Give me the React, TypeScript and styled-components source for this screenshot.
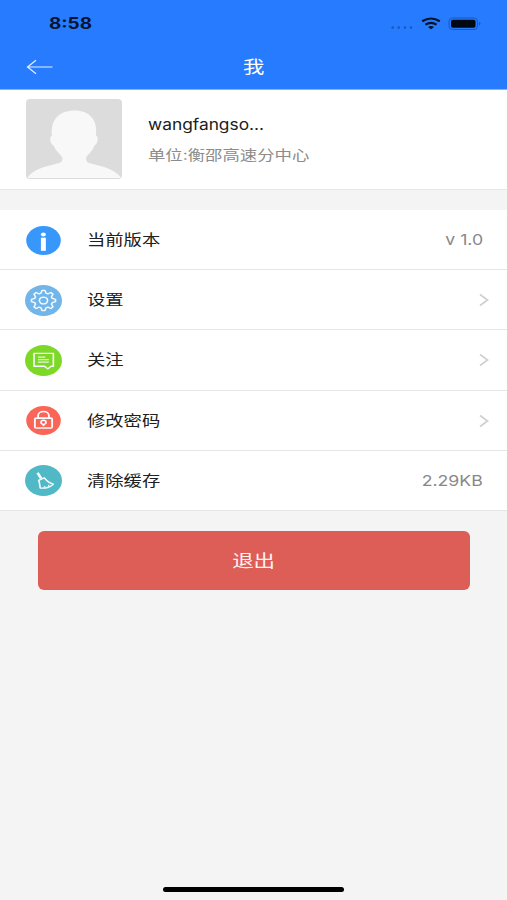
import React from "react";
import styled, { createGlobalStyle } from "styled-components";

const GlobalStyle = createGlobalStyle`
  * { box-sizing: border-box; }
  body {
    margin: 0;
    background: #f4f4f4;
    font-family: Inter, "Noto Sans CJK SC", sans-serif;
  }
`;

const Screen = styled.div`
  display: flex;
  flex-direction: column;
  height: 900px;
  background: #f4f4f4;
  overflow: hidden;
`;

const Header = styled.header`
  height: 90px;
  flex: none;
  background: #277bff;
  border-bottom: 1px solid #8bb4f6;
  color: #fff;
`;

const StatusBar = styled.div`
  display: flex;
  align-items: center;
  justify-content: space-between;
  height: 47px;
  padding: 0 26px 0 49px;
`;

const StatusIcons = styled.svg`
  width: 91px;
  height: 20px;
`;

const NavBar = styled.div`
  display: grid;
  grid-template-columns: 1fr auto 1fr;
  align-items: center;
  height: 40px;
  padding: 0 26px;
`;

const BackIcon = styled.svg`
  width: 27px;
  height: 16px;
`;

const Stretched = styled.span<{
  $size: number;
  $color: string;
  $origin?: string;
  $weight?: number;
  $ratio?: number;
}>`
  display: block;
  white-space: nowrap;
  font-size: ${(p) => p.$size}px;
  line-height: 24px;
  font-weight: ${(p) => p.$weight ?? 400};
  color: ${(p) => p.$color};
  transform: scaleX(${(p) => p.$ratio ?? 1.22});
  transform-origin: ${(p) => p.$origin ?? "left"} center;
`;

const Profile = styled.section`
  display: flex;
  flex: none;
  height: 100px;
  padding: 9px 26px 0;
  gap: 26px;
  background: #fff;
  border-bottom: 1px solid #e7e7e7;
`;

const Avatar = styled.svg`
  width: 96px;
  height: 80px;
  border-radius: 4px;
`;

const ProfileText = styled.div`
  display: flex;
  flex-direction: column;
  gap: 6px;
  padding-top: 14px;
`;

const Menu = styled.ul`
  margin: 20px 0 0;
  padding: 0;
  list-style: none;
  background: #fff;
`;

const MenuRow = styled.li`
  display: flex;
  align-items: center;
  height: 60.2px;
  padding: 1px 24px 0 25px;
  border-bottom: 1px solid #e6e6e6;
`;

const RowIcon = styled.svg`
  width: 37px;
  height: 31px;
  margin-right: 24.5px;
`;

const RowEnd = styled.div`
  margin-left: auto;
`;

const Chevron = styled.svg`
  display: block;
  width: 10px;
  height: 14px;
  margin-right: -6px;
`;

const LogoutButton = styled.button`
  display: flex;
  align-items: center;
  justify-content: center;
  flex: none;
  height: 59.5px;
  margin: 20px 37px 0 37.5px;
  border: 0;
  border-radius: 6px;
  background: #dd5e57;
  font-family: inherit;
`;

const HomeIndicator = styled.div`
  width: 181px;
  height: 5px;
  margin: auto auto 8px;
  border-radius: 3px;
  background: #000;
`;

const point = (radius: number, degrees: number) => {
  const a = (degrees * Math.PI) / 180;
  return `${(15 + radius * Math.cos(a)).toFixed(2)} ${(15 + radius * Math.sin(a)).toFixed(2)}`;
};

const gearPath =
  Array.from({ length: 8 }, (_, i) => {
    const c = i * 45;
    return `${i ? "L" : "M"}${point(7.4, c - 16)}L${point(9.8, c - 7)}L${point(9.8, c + 7)}L${point(7.4, c + 16)}`;
  }).join("") + "Z";

type IconName = "info" | "gear" | "message" | "lock" | "broom";

const discs: Record<IconName, { color: string; radius: number }> = {
  info: { color: "#3797fb", radius: 14 },
  gear: { color: "#72b5e9", radius: 15 },
  message: { color: "#7ed827", radius: 15 },
  lock: { color: "#fa6557", radius: 14 },
  broom: { color: "#50b9c5", radius: 15 },
};

const glyphs: Record<IconName, React.ReactNode> = {
  info: (
    <g fill="#fff" stroke="none">
      <circle cx="14.9" cy="9.2" r="2" />
      <path d="M12.9 12.3h4v12.700h-4z" />
    </g>
  ),
  gear: (
    <>
      <path d={gearPath} />
      <circle cx="15" cy="15" r="3.3" />
    </>
  ),
  message: (
    <>
      <path d="M7.3 8.100h15.700v12.500h-1.800l-2.700 2.500-2.700-2.500h-8.500z" />
      <path d="M10.5 11.700h6M10.5 14.100h8.800M10.5 16.500h8.800" strokeWidth="1.200" strokeOpacity=".85" />
    </>
  ),
  lock: (
    <>
      <path
        d="M10.6 12.700v-2.200c0-5.500 8.800-5.500 8.800 0v2.200M9 12.700h12q1 0 1 1v7.500q0 1-1 1H9q-1 0-1-1v-7.500q0-1 1-1z"
        strokeWidth="1.5"
      />
      <circle cx="15" cy="16.800" r="2" strokeWidth="1.400" />
      <path d="M15 18.800v1.700" strokeWidth="1.400" />
    </>
  ),
  broom: (
    <>
      <path d="M10.2 7.500l2.900 5.500" strokeWidth="2.2" />
      <path d="M10.6 15.100l5.500-2.900M11.2 15.200c.8 2.8.8 5.300 1.200 7.100 3.700.5 7.800-.8 10.500-3.700-3-1-5.200-2.900-7-5.800" />
      <path d="M15 21.8l1.5-1.5M19 20.7l.4-1.6" strokeWidth=".9" />
    </>
  ),
};

function MenuIcon({ name }: { name: IconName }) {
  const disc = discs[name];
  return (
    <RowIcon viewBox="0 0 30 30" preserveAspectRatio="none">
      <circle cx="15" cy="15" r={disc.radius} fill={disc.color} />
      <g fill="none" stroke="#f5fbff" strokeWidth="1.3" strokeLinejoin="round">
        {glyphs[name]}
      </g>
    </RowIcon>
  );
}

const items: { icon: IconName; label: string; value?: string }[] = [
  { icon: "info", label: "当前版本", value: "v 1.0" },
  { icon: "gear", label: "设置" },
  { icon: "message", label: "关注" },
  { icon: "lock", label: "修改密码" },
  { icon: "broom", label: "清除缓存", value: "2.29KB" },
];

export default function App() {
  return (
    <>
      <GlobalStyle />
      <Screen>
        <Header>
          <StatusBar>
            <Stretched $size={15.5} $color="#07142e" $weight={650} $ratio={1.22}>
              8:58
            </Stretched>
            <StatusIcons viewBox="390 14 91 20">
              <g fill="#1c59b9">
                <circle cx="392.7" cy="27.6" r="1.3" />
                <circle cx="398.7" cy="27.6" r="1.3" />
                <circle cx="404.9" cy="27.6" r="1.3" />
                <circle cx="411" cy="27.6" r="1.3" />
              </g>
              <g fill="none" stroke="#06132b" strokeWidth="2.2">
                <path d="M422.2 21.3q8.8-5.6 17.6 0" />
                <path d="M425.4 24.6q5.6-3.5 11.2 0" />
              </g>
              <path d="M428 27q3-1.8 6 0l-3 2.3z" fill="#06132b" />
              <rect x="449" y="18" width="28.5" height="11.5" rx="3.5" fill="none" stroke="#1d59b4" />
              <rect x="451" y="19.7" width="24.5" height="8" rx="1.8" fill="#000814" />
              <path d="M479 21.7q3 2 0 4z" fill="#1d59b4" />
            </StatusIcons>
          </StatusBar>
          <NavBar>
            <BackIcon viewBox="0 0 27 16" fill="none" stroke="#e4efff" strokeWidth="1.2">
              <path d="M26.5 8H1.5M10 1.3L1.5 8l8.5 6.7" />
            </BackIcon>
            <Stretched $size={17.5} $color="#fff" $origin="center">
              我
            </Stretched>
          </NavBar>
        </Header>

        <Profile>
          <Avatar viewBox="0 0 96 80">
            <rect width="96" height="80" fill="#dcdcdc" />
            <path
              d="M26 37C24 20 34 11.500 48.500 11.500S72 20 70 37c3 0 2 8-1.500 9.500C66 53 62 55 60 59c0 4 2 5 7 6 12 3 22 6 27.500 13v1H2v-1c5-7 15-10 27.500-13 5-1 7-2 7-6-2-4-6-6-9-12.500-3.500-1.500-4.500-9.500-1.500-9.500z"
              fill="#f8f8f8"
            />
          </Avatar>
          <ProfileText>
            <Stretched $size={15} $color="#202020" $ratio={1.155}>
              wangfangso...
            </Stretched>
            <Stretched $size={14} $color="#8c8c8c" $ratio={1.24}>
              单位:衡邵高速分中心
            </Stretched>
          </ProfileText>
        </Profile>

        <Menu>
          {items.map((item) => (
            <MenuRow key={item.icon}>
              <MenuIcon name={item.icon} />
              <Stretched $size={15} $color="#202020">
                {item.label}
              </Stretched>
              <RowEnd>
                {item.value ? (
                  <Stretched $size={15} $color="#888" $origin="right" $ratio={1.18}>
                    {item.value}
                  </Stretched>
                ) : (
                  <Chevron viewBox="0 0 10 14" fill="none" stroke="#d0d0d0" strokeWidth="1.7">
                    <path d="M1 1.500L8.500 7l-7.500 5.500" />
                  </Chevron>
                )}
              </RowEnd>
            </MenuRow>
          ))}
        </Menu>

        <LogoutButton>
          <Stretched $size={17.6} $color="#fff3f2" $origin="center">
            退出
          </Stretched>
        </LogoutButton>
        <HomeIndicator />
      </Screen>
    </>
  );
}
